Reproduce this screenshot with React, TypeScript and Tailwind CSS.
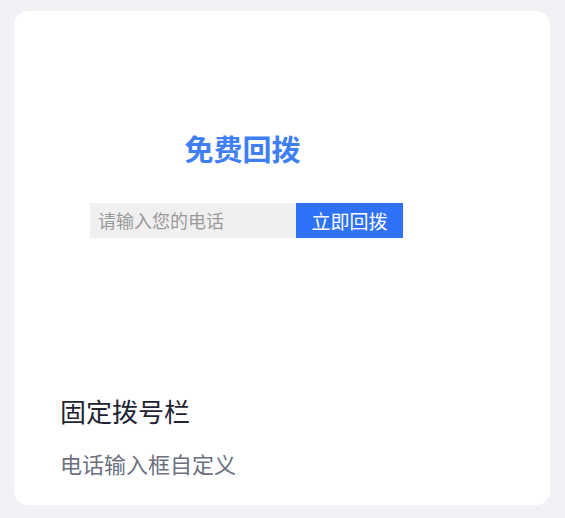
export default function App() {
  return (
    <div
      className="w-[565px] h-[518px] bg-[#f1f2f6] pt-[11px] pl-[14px]"
      style={{ fontFamily: '"Noto Sans CJK SC", "Noto Sans", sans-serif' }}
    >
      <div className="w-[536px] h-[494px] bg-white rounded-[14px] flex flex-col">
        <div className="h-[382px] flex flex-col items-center pl-[72px] pr-[143px] pt-[117px]">
          <div className="text-[29px] leading-[40px] font-bold text-[#3f7ff2] mr-[8px]">免费回拨</div>
          <div className="flex mt-[35px]">
            <div className="w-[206px] h-[35px] bg-[#f0f0f0] text-[#9a9a9a] text-[18px] leading-[35px] pl-[8px]">
              请输入您的电话
            </div>
            <div className="w-[107px] h-[35px] bg-[#2f72f7] text-white text-[19px] leading-[35px] text-center">
              立即回拨
            </div>
          </div>
        </div>
        <div className="px-[46px]">
          <div className="text-[26px] leading-[36px] text-[#1f2333]">固定拨号栏</div>
          <div className="text-[22px] leading-[30px] text-[#6b7080] mt-[19px]">电话输入框自定义</div>
        </div>
      </div>
    </div>
  );
}
